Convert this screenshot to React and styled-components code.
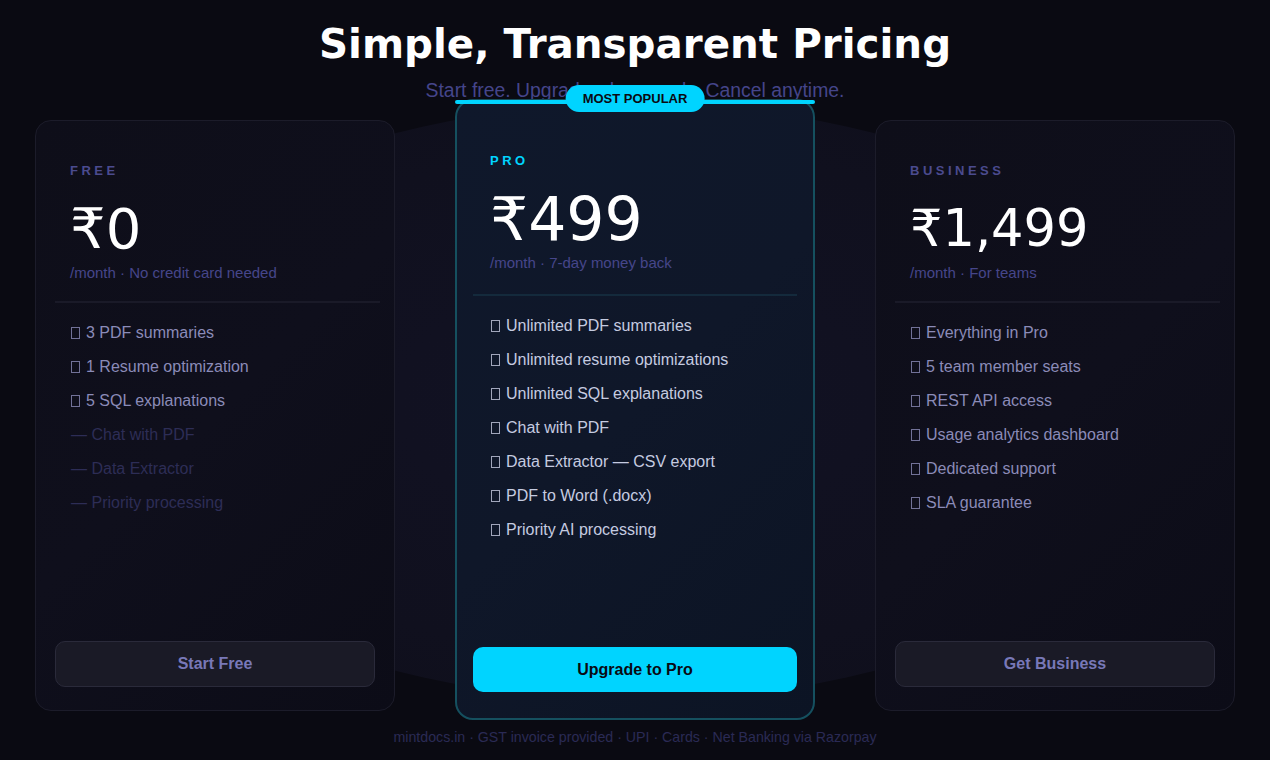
import styled, { createGlobalStyle } from "styled-components";

const GlobalStyle = createGlobalStyle`
  html, body {
    margin: 0;
    padding: 0;
    background: #0a0a12;
  }
  body {
    font-family: "Liberation Sans", Arial, sans-serif;
    color: #fff;
  }
`;

const plans = [
  {
    id: "free",
    name: "FREE",
    price: "₹0",
    size: 56,
    note: "/month · No credit card needed",
    features: [
      { text: "3 PDF summaries", on: true },
      { text: "1 Resume optimization", on: true },
      { text: "5 SQL explanations", on: true },
      { text: "Chat with PDF", on: false },
      { text: "Data Extractor", on: false },
      { text: "Priority processing", on: false },
    ],
    cta: "Start Free",
  },
  {
    id: "pro",
    name: "PRO",
    price: "₹499",
    size: 60,
    note: "/month · 7-day money back",
    features: [
      { text: "Unlimited PDF summaries", on: true },
      { text: "Unlimited resume optimizations", on: true },
      { text: "Unlimited SQL explanations", on: true },
      { text: "Chat with PDF", on: true },
      { text: "Data Extractor — CSV export", on: true },
      { text: "PDF to Word (.docx)", on: true },
      { text: "Priority AI processing", on: true },
    ],
    cta: "Upgrade to Pro",
    popular: true,
  },
  {
    id: "business",
    name: "BUSINESS",
    price: "₹1,499",
    size: 51,
    note: "/month · For teams",
    features: [
      { text: "Everything in Pro", on: true },
      { text: "5 team member seats", on: true },
      { text: "REST API access", on: true },
      { text: "Usage analytics dashboard", on: true },
      { text: "Dedicated support", on: true },
      { text: "SLA guarantee", on: true },
    ],
    cta: "Get Business",
  },
];

const App = () => {
  return (
    <Page>
      <GlobalStyle />
      <Glow />
      <Title>Simple, Transparent Pricing</Title>
      <Subtitle>Start free. Upgrade when ready. Cancel anytime.</Subtitle>
      <Grid>
        {plans.map((plan) => (
          <Card key={plan.id} $popular={plan.popular}>
            {plan.popular && (
              <>
                <TopLine />
                <Badge>MOST POPULAR</Badge>
              </>
            )}
            <Head $popular={plan.popular}>
              <PlanName $popular={plan.popular}>{plan.name}</PlanName>
              <Price $size={plan.size}>{plan.price}</Price>
              <Note>{plan.note}</Note>
            </Head>
            <Divider $popular={plan.popular} />
            <Features $popular={plan.popular}>
              {plan.features.map((f) => (
                <Feature key={f.text} $on={f.on} $popular={plan.popular}>
                  {f.on ? <Box /> : "— "}
                  {f.text}
                </Feature>
              ))}
            </Features>
            <Button $popular={plan.popular}>{plan.cta}</Button>
          </Card>
        ))}
      </Grid>
      <Footer>mintdocs.in · GST invoice provided · UPI · Cards · Net Banking via Razorpay</Footer>
    </Page>
  );
};

export default App;

const Page = styled.div`
  position: relative;
  width: 1270px;
  height: 760px;
  overflow: hidden;
  display: flex;
  flex-direction: column;
  align-items: center;
  background: #0a0a12;
`;

const Glow = styled.div`
  position: absolute;
  left: 80px;
  top: 104px;
  width: 1110px;
  height: 596px;
  border-radius: 50%;
  background: radial-gradient(ellipse at center, #121224 0%, #10101e 60%, #0e0e1a 100%);
  z-index: 0;
`;

const Title = styled.h1`
  position: relative;
  z-index: 1;
  margin: 20px 0 0;
  font-family: "DejaVu Sans", sans-serif;
  font-weight: 700;
  font-size: 40.4px;
  line-height: 48px;
  color: #ffffff;
`;

const Subtitle = styled.p`
  position: relative;
  z-index: 1;
  margin: 11px 0 0;
  font-size: 19.4px;
  line-height: 22px;
  color: #45458a;
`;

const Grid = styled.div`
  position: relative;
  z-index: 1;
  margin-top: -2px;
  display: grid;
  grid-template-columns: repeat(3, 360px);
  gap: 60px;
  align-items: start;
`;

const Card = styled.div`
  position: relative;
  box-sizing: border-box;
  height: ${(p) => (p.$popular ? "621px" : "591px")};
  margin-top: ${(p) => (p.$popular ? "0" : "21px")};
  padding: ${(p) => (p.$popular ? "0 16px 26px" : "0 19px 23px")};
  display: flex;
  flex-direction: column;
  border-radius: ${(p) => (p.$popular ? "18px" : "16px")};
  border: ${(p) => (p.$popular ? "2px solid #15505f" : "1px solid #1c1c2a")};
  background: ${(p) =>
    p.$popular
      ? "linear-gradient(135deg, #0f182b 0%, #0f1729 50%, #0c1424 100%)"
      : "linear-gradient(135deg, #0e0e19 0%, #0f0f1c 50%, #0c0c17 100%)"};
`;

const TopLine = styled.div`
  position: absolute;
  left: -2px;
  right: -2px;
  top: -1px;
  height: 4px;
  border-radius: 2px;
  background: #00d4ff;
`;

const Badge = styled.div`
  position: absolute;
  top: -16px;
  left: 50%;
  transform: translateX(-50%);
  padding: 0 17px;
  height: 27px;
  line-height: 28px;
  border-radius: 14px;
  background: #00d4ff;
  color: #0a0a12;
  font-size: 13px;
  font-weight: 700;
  white-space: nowrap;
`;

const Head = styled.div`
  padding: ${(p) => (p.$popular ? "52px 17px 0" : "42px 15px 0")};
  display: flex;
  flex-direction: column;
`;

const PlanName = styled.div`
  font-size: 13px;
  font-weight: 700;
  letter-spacing: 3.5px;
  line-height: 16px;
  color: ${(p) => (p.$popular ? "#00d4ff" : "#4b4b8f")};
`;

const Price = styled.div`
  margin-top: 15px;
  font-family: "DejaVu Sans", sans-serif;
  font-size: ${(p) => p.$size}px;
  line-height: 70px;
  color: #ffffff;
`;

const Note = styled.div`
  margin-top: 0;
  font-size: 15px;
  line-height: 18px;
  color: #46468a;
`;

const Divider = styled.div`
  height: 2px;
  margin: ${(p) => (p.$popular ? "22px 0 0" : "19px -5px 0 0")};
  background: ${(p) => (p.$popular ? "#142a3c" : "#1a1a28")};
`;

const Features = styled.ul`
  list-style: none;
  margin: 0;
  padding: 13px 0 0 ${(p) => (p.$popular ? "18px" : "16px")};
  flex: 1;
`;

const Feature = styled.li`
  font-size: 16px;
  line-height: 34px;
  color: ${(p) => (!p.$on ? "#2d2d56" : p.$popular ? "#c5cbe0" : "#8b8bb8")};
`;

const Box = styled.span`
  display: inline-block;
  box-sizing: border-box;
  width: 9px;
  height: 12px;
  margin-right: 6px;
  vertical-align: -1px;
  border: 1px solid currentColor;
  opacity: 0.8;
`;

const Button = styled.button`
  box-sizing: border-box;
  width: 100%;
  height: ${(p) => (p.$popular ? "45px" : "46px")};
  border-radius: 10px;
  border: ${(p) => (p.$popular ? "none" : "1px solid #2a2a3a")};
  background: ${(p) => (p.$popular ? "#00d4ff" : "#1a1a26")};
  color: ${(p) => (p.$popular ? "#0a0a12" : "#7878b8")};
  font-family: "Liberation Sans", Arial, sans-serif;
  font-size: 16px;
  font-weight: 700;
  cursor: pointer;
`;

const Footer = styled.div`
  position: relative;
  z-index: 1;
  margin-top: 9px;
  font-size: 14.2px;
  line-height: 16px;
  color: #2a2a55;
`;
